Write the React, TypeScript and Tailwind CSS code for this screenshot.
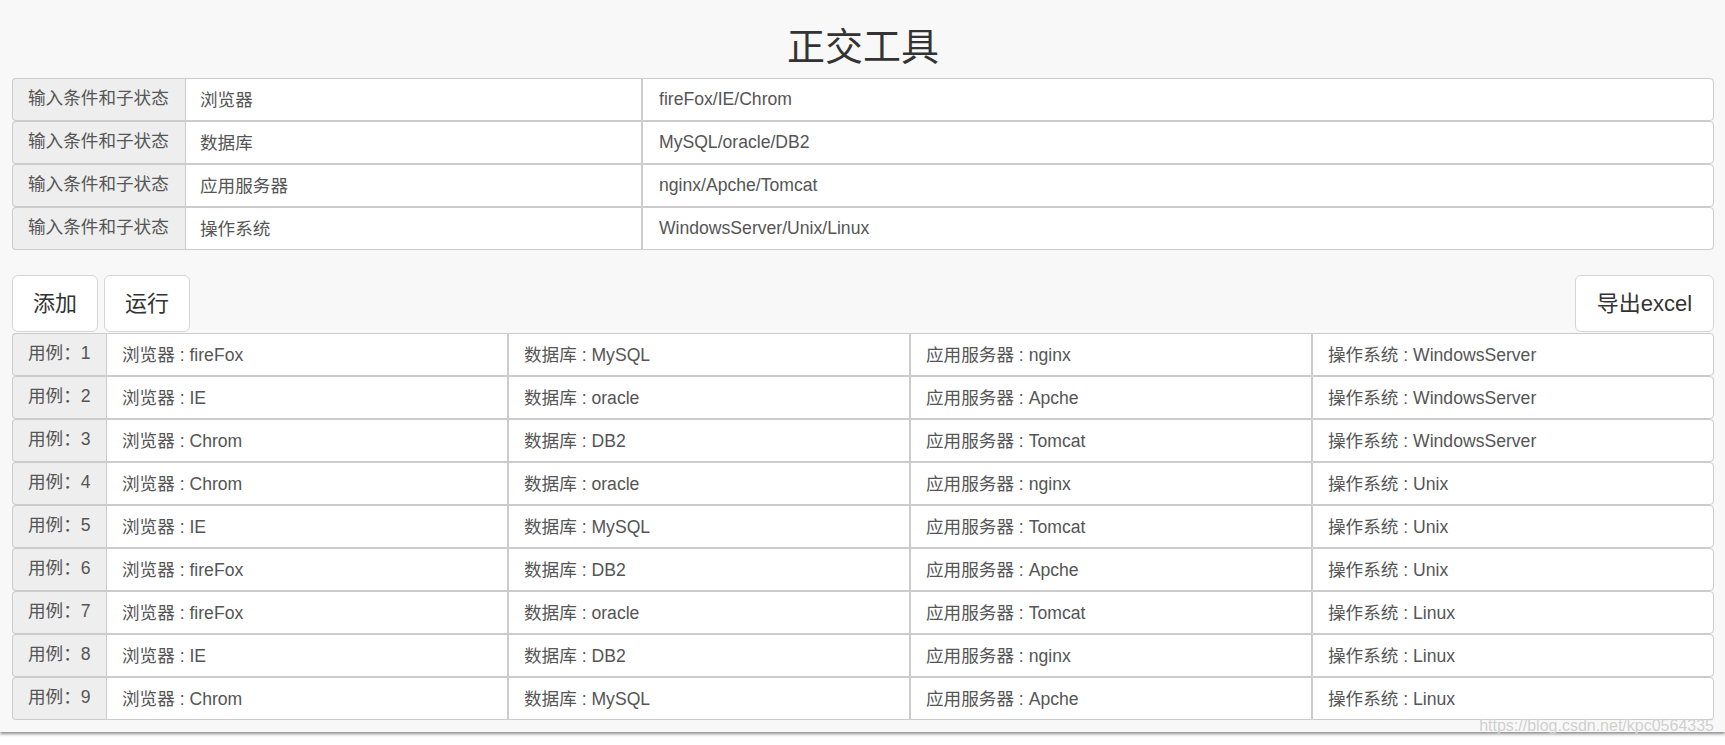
import React from "react";

const font = { fontFamily: '"Liberation Sans", "Noto Sans CJK SC", sans-serif' };

const inputs: [string, string][] = [
  ["浏览器", "fireFox/IE/Chrom"],
  ["数据库", "MySQL/oracle/DB2"],
  ["应用服务器", "nginx/Apche/Tomcat"],
  ["操作系统", "WindowsServer/Unix/Linux"],
];

const cases: [string, string, string, string][] = [
  ["fireFox", "MySQL", "nginx", "WindowsServer"],
  ["IE", "oracle", "Apche", "WindowsServer"],
  ["Chrom", "DB2", "Tomcat", "WindowsServer"],
  ["Chrom", "oracle", "nginx", "Unix"],
  ["IE", "MySQL", "Tomcat", "Unix"],
  ["fireFox", "DB2", "Apche", "Unix"],
  ["fireFox", "oracle", "Tomcat", "Linux"],
  ["IE", "DB2", "nginx", "Linux"],
  ["Chrom", "MySQL", "Apche", "Linux"],
];

const names = ["浏览器", "数据库", "应用服务器", "操作系统"];

export default function App() {
  return (
    <div className="min-h-[745px] bg-white" style={font}>
      <div className="relative bg-[#f8f8f8] pl-[12px] pr-[11px] pb-[12px] shadow-[0_2px_3px_rgba(0,0,0,0.45)]">
        <h1 className="pt-[27px] pb-[11px] text-center text-[38px] leading-[40px] text-[#333]">正交工具</h1>

        <div className="flex flex-col">
          {inputs.map(([k, v], i) => (
            <div key={i} className="flex h-[43px] text-[17.6px] text-[#555]">
              <div className="flex w-[173px] items-center rounded-l-[4px] border border-r-0 border-[#ccc] bg-[#eee] pl-[15px] pb-[3px]">
                输入条件和子状态
              </div>
              <div className="flex w-[457px] items-center border border-[#ccc] bg-white pl-[14px] pt-[1px]">{k}</div>
              <div className="flex flex-1 items-center rounded-r-[4px] border border-[#ccc] bg-white pl-[16px]">{v}</div>
            </div>
          ))}
        </div>

        <div className="mt-[25px] mb-[1px] flex h-[57px] items-stretch gap-[6px]">
          <button className="w-[86px] rounded-[6px] border border-[#d5d5d5] bg-white text-[22px] text-[#333]">添加</button>
          <button className="w-[86px] rounded-[6px] border border-[#d5d5d5] bg-white text-[22px] text-[#333]">运行</button>
          <div className="flex-1" />
          <button className="w-[139px] rounded-[6px] border border-[#d5d5d5] bg-white text-[22px] text-[#333]">导出excel</button>
        </div>

        <div className="flex flex-col">
          {cases.map((c, i) => (
            <div key={i} className="flex h-[43px] text-[17.6px] text-[#555]">
              <div className="flex w-[94px] items-center rounded-l-[4px] border border-r-0 border-[#ccc] bg-[#eee] pl-[15px] pb-[3px]">
                用例：{i + 1}
              </div>
              {c.map((v, j) => (
                <div
                  key={j}
                  className={
                    j === 3
                      ? "flex flex-1 items-center rounded-r-[4px] border border-[#ccc] bg-white pl-[15px] pt-[1px]"
                      : "flex flex-1 items-center border border-[#ccc] bg-white pl-[15px] pt-[1px]"
                  }
                >
                  {names[j]} : {v}
                </div>
              ))}
            </div>
          ))}
        </div>

        <div className="pointer-events-none absolute right-[11px] bottom-[-6px] text-[16px] text-[rgba(190,190,190,0.75)] [text-shadow:0_0_1px_rgba(255,255,255,0.9)]">
          https://blog.csdn.net/kpc0564335
        </div>
      </div>
    </div>
  );
}
